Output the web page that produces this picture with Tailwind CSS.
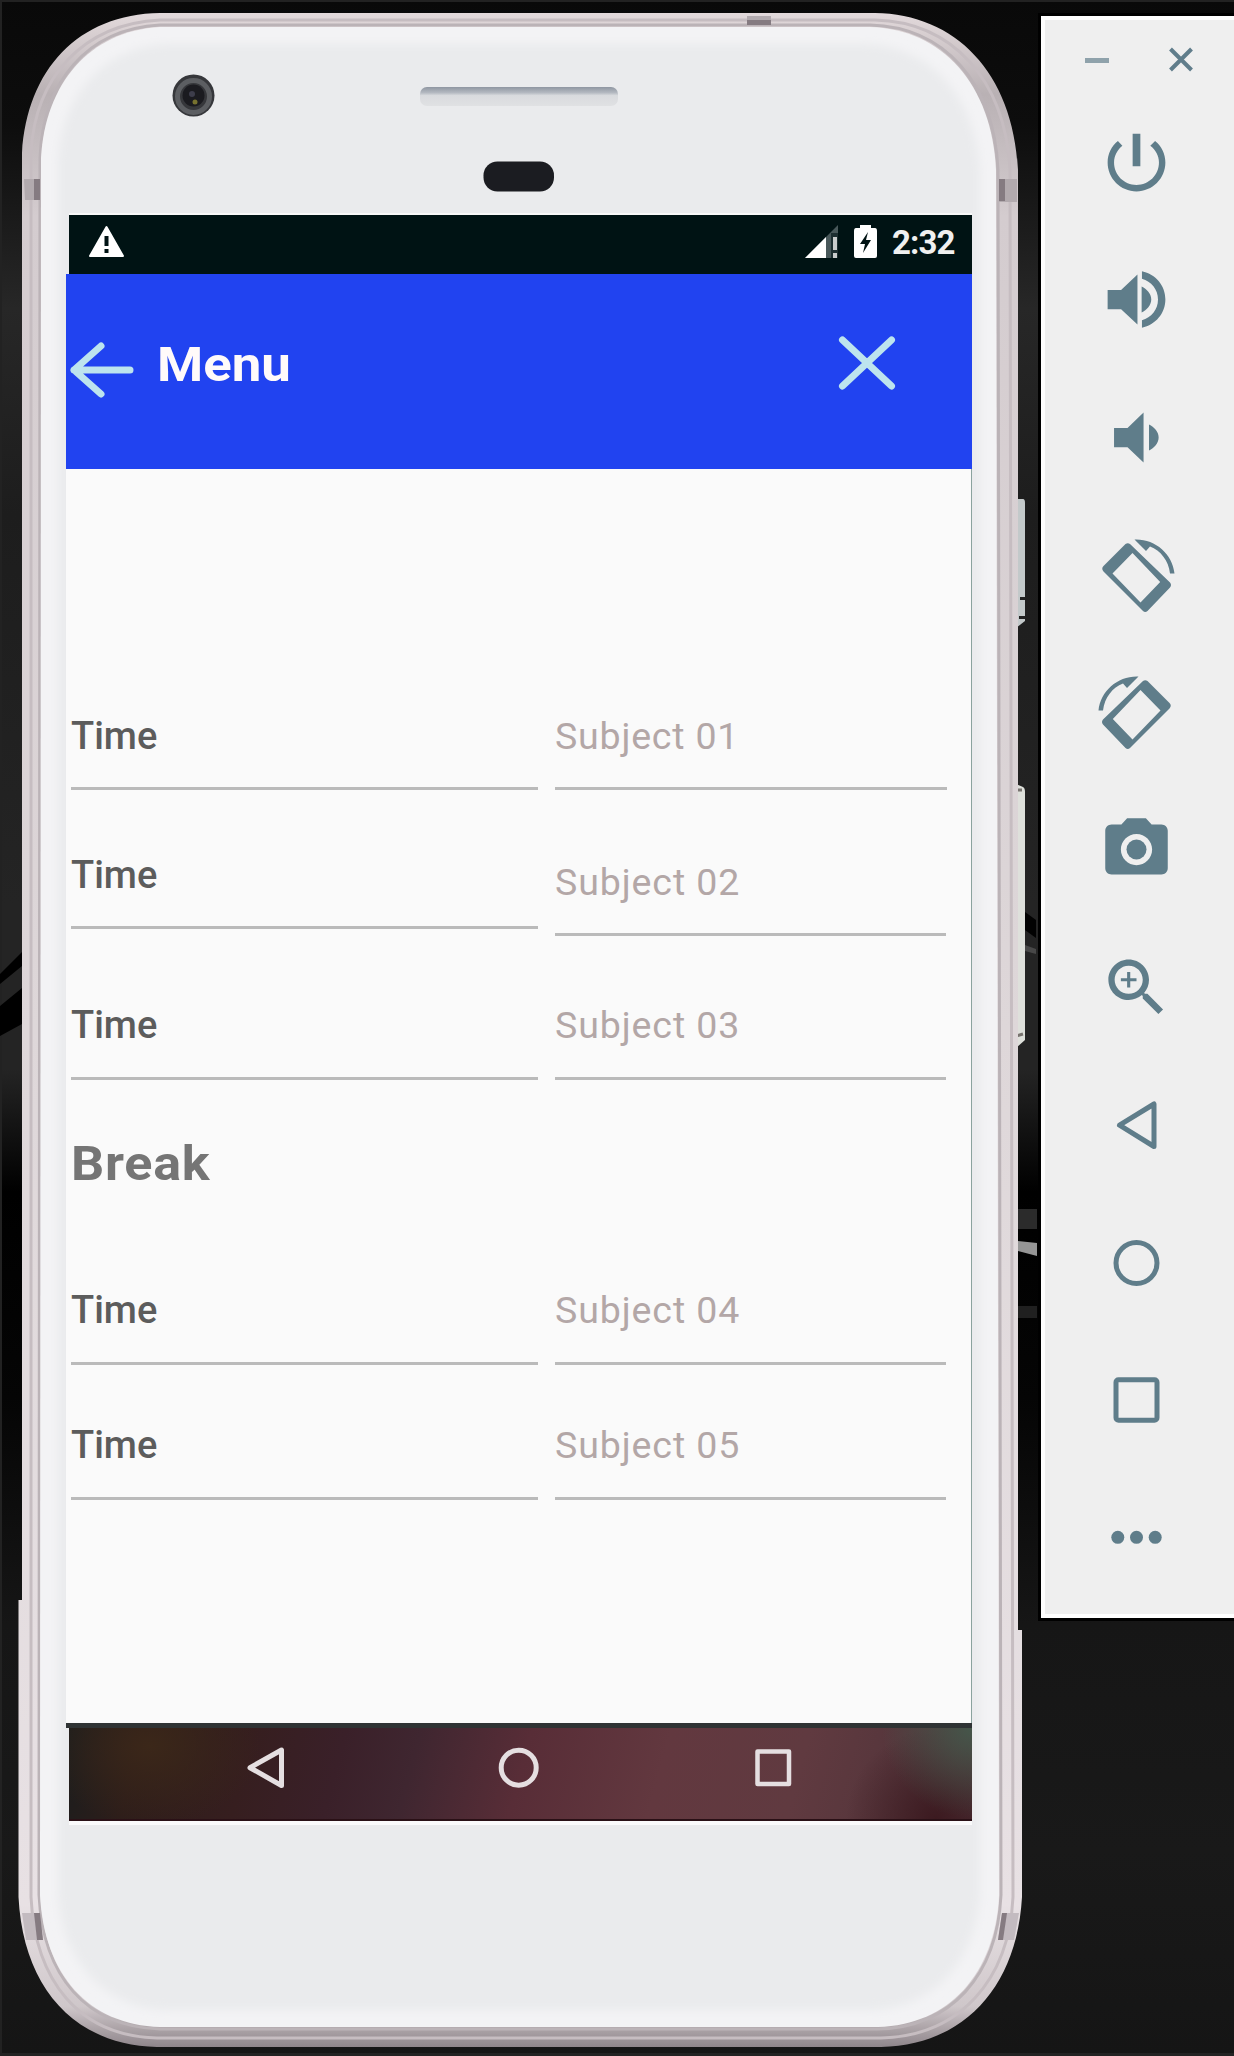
<!DOCTYPE html>
<html lang="en">
<head>
<meta charset="utf-8">
<title>Menu</title>
<script src="https://cdn.jsdelivr.net/npm/@tailwindcss/browser@4"></script>
</head>
<body class="bg-[#141414]">
<div class="relative flex h-[2056px] w-[1234px] items-start overflow-hidden font-[Roboto,sans-serif]">

  <!-- wallpaper and phone body -->
  <svg class="absolute inset-0" width="1234" height="2056" viewBox="0 0 1234 2056" fill="none">
    <defs>
      <linearGradient id="wall" x1="0" y1="0" x2="0" y2="1">
        <stop offset="0" stop-color="#090909"/><stop offset=".06" stop-color="#0d0d0d"/>
        <stop offset=".15" stop-color="#272727"/><stop offset=".25" stop-color="#1d1d1d"/>
        <stop offset=".44" stop-color="#242424"/><stop offset=".52" stop-color="#242424"/>
        <stop offset=".58" stop-color="#000"/><stop offset=".68" stop-color="#050505"/>
        <stop offset=".79" stop-color="#161616"/><stop offset=".9" stop-color="#191919"/>
        <stop offset="1" stop-color="#151515"/>
      </linearGradient>
      <linearGradient id="frame" x1="0" y1="0" x2="0" y2="1">
        <stop offset="0" stop-color="#e2d9db"/><stop offset=".04" stop-color="#b9b1b4"/>
        <stop offset=".1" stop-color="#d4cccf"/><stop offset=".5" stop-color="#ded7d9"/>
        <stop offset=".93" stop-color="#e8e1e4"/><stop offset=".98" stop-color="#cfc7ca"/>
        <stop offset="1" stop-color="#8f868b"/>
      </linearGradient>
      <linearGradient id="slot" x1="0" y1="0" x2="0" y2="1">
        <stop offset="0" stop-color="#8f96a1"/><stop offset=".3" stop-color="#b4b9c1"/>
        <stop offset=".45" stop-color="#d9dbde"/><stop offset="1" stop-color="#e0e1e3"/>
      </linearGradient>
      <filter id="soft" x="-10%" y="-10%" width="120%" height="120%"><feGaussianBlur stdDeviation="5"/></filter>
    </defs>
    <rect width="1234" height="2056" fill="url(#wall)"/>
    <path d="M0 0H1234V2H0ZM0 0H2V2056H0ZM0 2053H1234V2056H0Z" fill="#222"/>
    <path d="M0 974L22 952V966L0 984ZM0 1006L22 988V1024L0 1036Z" fill="#000"/>
    <path d="M1025 912L1036 920V938L1025 930Z" fill="#020202"/>
    <path d="M1025 945L1036 949V954L1025 951Z" fill="#484848"/>
    <path d="M1018 1209H1037V1229H1018Z" fill="#2b2b2b"/>
    <path d="M1018 1241L1037 1243V1256L1018 1251Z" fill="#969696"/>
    <path d="M1018 1306H1037V1318H1018Z" fill="#202020"/>

    <path d="M1016 499H1023Q1025 499 1025 503V621L1016 628Z" fill="#c3c9ca"/>
    <path d="M1020 597H1025V600H1020ZM1019 616H1025V619H1019Z" fill="#222"/>
    <path d="M1016 784L1023 787Q1025 788 1025 792V1040L1016 1048Z" fill="#dee0db"/>
    <path d="M1016 790H1022M1016 1036L1023 1034" stroke="#77736f" stroke-width="3"/>

    <path d="M160 13H875C955 14 1013 72 1018 170V1630H1022V1897C1017 1986 965 2045 881 2047H157C73 2045 23 1986 18.500 1897V1600H22V153C27 70 78 14 160 13Z" fill="url(#frame)"/>
    <path d="M160 20H875C951 22 1005 78 1010 170L1013 1897C1009 1981 959 2036 881 2038H157C79 2036 35 1981 31 1897V153C35 77 83 24 160 20Z" stroke="#c6bdc1" stroke-width="3"/>
    <path d="M160 25H870C944 27 994 82 998 170L1001 1895C997 1976 951 2027 878 2029H160C86 2027 43 1976 39 1895L40 158C43 82 87 29 160 25Z" stroke="#bbb3b7" stroke-width="3"/>
    <path d="M160 27H870C942 29 992 84 996 170L999 1895C995 1974 949 2025 878 2027H160C88 2025 44 1974 40 1895L41 158C45 84 89 31 160 27Z" fill="#f3f3f5"/>
    <path d="M165 44H865C930 46 975 96 980 170V1895C976 1960 934 2008 872 2010H165C104 2008 62 1960 58 1895V160C62 94 104 48 165 44Z" fill="#eaebed" filter="url(#soft)"/>

    <path d="M24 179H40V200H25Z" fill="#b2aaae"/><path d="M34 179H40V200H34Z" fill="#857b81"/>
    <path d="M999 179H1017V202H999Z" fill="#b2aaae"/><path d="M999 179H1005V201H999Z" fill="#857b81"/>
    <path d="M747 16H771V25H747Z" fill="#b2aaae"/><path d="M747 20H771V25H747Z" fill="#857b81"/>
    <path d="M22 1913H40L43 1940H26Z" fill="#c3bbc0"/><path d="M34 1913H40L43 1940H37Z" fill="#857b81"/>
    <path d="M1002 1913H1019L1014 1940H998Z" fill="#c3bbc0"/><path d="M1002 1913H1007L1003 1940H998Z" fill="#857b81"/>

    <circle cx="193.500" cy="95.500" r="21" fill="#36373b"/>
    <circle cx="193.500" cy="96.500" r="16" stroke="#5c5e62" stroke-width="5"/>
    <circle cx="193.500" cy="95.500" r="11" fill="#1b1b20"/>
    <circle cx="192" cy="94" r="3" fill="#3d3d4b"/><circle cx="195" cy="102" r="2.500" fill="#77722f"/>
    <rect x="420" y="87" width="198" height="19" rx="7" fill="url(#slot)"/>
    <rect x="483.500" y="161.500" width="70.500" height="30" rx="14" fill="#1b1c21"/>
  </svg>

  <!-- phone screen -->
  <main class="relative ml-[66px] mt-[215px] w-[906px]">
    <div class="ml-[3px] flex h-[59px] items-start bg-[#001314] pl-[19px] pr-[18px] pt-[9px] shadow-[0_-2px_0_#f8f8f8]">
      <svg class="mt-px" width="37" height="33" viewBox="0 0 37 33"><path d="M18.500 2L35 31H2Z" fill="#fff" stroke="#fff" stroke-width="2" stroke-linejoin="round"/><path d="M18.500 11V21M18.500 24V28" stroke="#001314" stroke-width="4"/></svg>
      <svg class="ml-auto" width="33" height="34" viewBox="0 0 33 34"><path d="M33 1V34H0Z" fill="#48585a"/><path d="M21 13V34H0Z" fill="#fff"/><path d="M26 9H33V34H26Z" fill="#001314" fill-opacity=".6"/><path d="M30 13V26M30 29V34" stroke="#c8cccc" stroke-width="4"/></svg>
      <svg class="ml-4" width="23" height="34" viewBox="0 0 23 34"><path d="M6 1H17V4H21Q23 4 23 7V32Q23 34 21 34H2Q0 34 0 32V7Q0 4 2 4H6Z" fill="#fff"/><path d="M14 8L6 20H11L9 29L17 16H12Z" fill="#001314"/></svg>
      <span class="-mt-px ml-[15px] w-[62px] whitespace-nowrap text-[33px] font-bold leading-[40px] tracking-[-0.9px] text-[#f0f0f0]">2:32</span>
    </div>
    <header class="flex h-[195px] items-start bg-[#2143f0] pl-[3px] pr-[75px]">
      <svg class="mt-[67px]" width="66" height="58" viewBox="0 0 66 58" fill="none" stroke="#bde4ee" stroke-width="7" stroke-linecap="round" stroke-linejoin="round"><path d="M32 5L5 29L32 53M5 29H61"/></svg>
      <h1 class="ml-[22px] mt-[63px] origin-left scale-x-[1.1] text-[48px] font-bold leading-[56px] text-[#fffafa]">Menu</h1>
      <svg class="ml-auto mt-[61px]" width="60" height="56" viewBox="0 0 60 56" stroke="#bde4ee" stroke-width="7" stroke-linecap="round"><path d="M5.500 5L54.500 51M54.500 5L5.500 51"/></svg>
    </header>

    <section class="h-[1254px] border-r border-[#8ba39f] bg-[#fafafa] pl-[5px] pt-[231px]">
      <div class="flex h-[139px] items-start gap-[17px]">
        <div class="h-[90px] w-[467px] border-b-[3px] border-[#bababa] pt-[14px] text-[38px] font-medium leading-[44px] text-[#5c5c5c]">Time</div>
        <div class="h-[90px] w-[392px] border-b-[3px] border-[#bababa] pt-[14px] text-[37.500px] leading-[44px] tracking-[0.8px] text-[#b3a7a7]">Subject 01</div>
      </div>
      <div class="flex h-[151px] items-start gap-[17px]">
        <div class="h-[90px] w-[467px] border-b-[3px] border-[#bababa] pt-[14px] text-[38px] font-medium leading-[44px] text-[#5c5c5c]">Time</div>
        <div class="mt-[7px] h-[90px] w-[391px] border-b-[3px] border-[#bababa] pt-[14px] text-[37.500px] leading-[44px] tracking-[0.9px] text-[#b3a7a7]">Subject 02</div>
      </div>
      <div class="flex h-[137px] items-start gap-[17px]">
        <div class="h-[90px] w-[467px] border-b-[3px] border-[#bababa] pt-[13px] text-[38px] font-medium leading-[44px] text-[#5c5c5c]">Time</div>
        <div class="h-[90px] w-[391px] border-b-[3px] border-[#bababa] pt-[13px] text-[37.500px] leading-[44px] tracking-[0.9px] text-[#b3a7a7]">Subject 03</div>
      </div>
      <h2 class="h-[148px] w-fit origin-left scale-x-[1.085] pt-[9px] text-[48px] font-bold leading-[56px] tracking-[0.7px] text-[#757575]">Break</h2>
      <div class="flex h-[135px] items-start gap-[17px]">
        <div class="h-[90px] w-[467px] border-b-[3px] border-[#bababa] pt-[13px] text-[38px] font-medium leading-[44px] text-[#5c5c5c]">Time</div>
        <div class="h-[90px] w-[391px] border-b-[3px] border-[#bababa] pt-[13px] text-[37.500px] leading-[44px] tracking-[0.9px] text-[#b3a7a7]">Subject 04</div>
      </div>
      <div class="flex items-start gap-[17px]">
        <div class="h-[90px] w-[467px] border-b-[3px] border-[#bababa] pt-[13px] text-[38px] font-medium leading-[44px] text-[#5c5c5c]">Time</div>
        <div class="h-[90px] w-[391px] border-b-[3px] border-[#bababa] pt-[13px] text-[37.500px] leading-[44px] tracking-[0.9px] text-[#b3a7a7]">Subject 05</div>
      </div>
    </section>

    <div class="h-[5px] bg-[#2f3334]"></div>
    <nav class="ml-[3px] flex h-[93px] items-start border-b-2 border-b-[#2a1016] bg-[radial-gradient(circle_at_100%_0%,#45564a_0,#45564a00_90px),radial-gradient(circle_at_96%_100%,#3c1a20_0,#3c1a2000_90px),radial-gradient(110px_80px_at_9%_20%,#3b2719_0,#3b271900_100%),linear-gradient(105deg,#1b1d1d_0%,#2d1d1a_8%,#361e1f_20%,#3a2029_30%,#3f2630_38%,#582d37_50%,#62383f_65%,#603a40_80%,#4d3238_100%)] pt-[18px] shadow-[0_4px_0_#fafafb]">
      <svg class="ml-[177px]" width="40" height="44" viewBox="0 0 40 44" fill="none" stroke="#e5dfe1" stroke-width="5" stroke-linejoin="round"><path d="M35.500 4V39.500L4 21.700Z"/></svg>
      <svg class="ml-[212px]" width="42" height="44" viewBox="0 0 42 44" fill="none" stroke="#e5dfe1" stroke-width="5"><circle cx="20.700" cy="21.700" r="17.500"/></svg>
      <svg class="ml-[213px]" width="40" height="44" viewBox="0 0 40 44" fill="none" stroke="#e5dfe1" stroke-width="4.500" stroke-linejoin="round"><path d="M4.500 5.500H36V38H4.500Z"/></svg>
    </nav>
  </main>

  <!-- emulator toolbar -->
  <aside class="relative ml-[69px] mt-[16px] h-[1602px] w-[193px] border-4 border-r-0 border-white bg-[#efefef] shadow-[0_0_0_3px_#000]">
    <div class="flex h-[73px] items-start pl-[40px] pt-[27px]">
      <svg class="mt-px" width="24" height="24" viewBox="0 0 24 24"><path d="M0 10H24V15H0Z" fill="#8fa2ab"/></svg>
      <svg class="ml-[59px]" width="26" height="26" viewBox="0 0 26 26" stroke="#607d8b" stroke-width="4"><path d="M2.500 2L23.500 23M23.500 2L2.500 23"/></svg>
    </div>
    <div class="grid auto-rows-[137.45px] justify-items-center pr-[6px] text-[#5f7d8a] [&>svg]:mt-[31px] [&>svg]:self-start [&>svg]:overflow-visible">
      <svg width="77" height="77" viewBox="0 0 24 24" fill="currentColor"><path d="M13.200 3h-2.400v10.200h2.400V3zm4.600 2.300l-1.500 1.500C17.900 8 19 9.900 19 12c0 3.870-3.130 7-7 7s-7-3.130-7-7c0-2.100 1.100-4 2.600-5.200L6.200 5.300C4.200 6.900 3 9.300 3 12c0 4.970 4.030 9 9 9s9-4.030 9-9c0-2.700-1.200-5.100-3.200-6.700z"/></svg>
      <svg width="77" height="77" viewBox="0 0 24 24" fill="currentColor"><path d="M3 9v6h4.200l5.100 4.800V4.200L7.200 9H3zm13.600 3c0-1.770-1.400-3.290-3-4.030v8.050c1.600-.73 3-2.250 3-4.020zM13.700 3.230v2.300c2.890.86 5 3.300 5 6.470s-2.110 5.610-5 6.470v2.300c4.310-.91 7.300-4.490 7.300-8.770s-2.990-7.860-7.300-8.770z"/></svg>
      <svg width="77" height="77" viewBox="0 0 24 24" fill="currentColor"><path d="M18.900 12c0-1.770-1.400-3.290-3-4.030v8.050c1.600-.73 3-2.250 3-4.020zM5 9v6h4.200l5 4.800V4.200L9.200 9H5z"/></svg>
      <svg width="77" height="77" viewBox="-38.500 -38.500 77 77" fill="currentColor"><path fill-rule="evenodd" d="M-11 -30.500Q-8.700 -32 -6.500 -30.500L33.500 8Q35.500 10.500 33.500 13L11 36.500Q8.700 38.500 6.500 36.500L-33 -3Q-35.500 -6 -33 -8.500ZM-4 -21.500L-24 -1L4 28L23.700 7.500Z"/><path d="M-2 -35C18 -36 36 -21 38 -1H33.500C32 -14 24 -24 13.500 -28L9.500 -23.500Z"/></svg>
      <svg width="77" height="77" viewBox="-38.500 -38.500 77 77" fill="currentColor"><g transform="translate(0 -1) scale(-1 1)"><path fill-rule="evenodd" d="M-11 -30.500Q-8.700 -32 -6.500 -30.500L33.500 8Q35.500 10.500 33.500 13L11 36.500Q8.700 38.500 6.500 36.500L-33 -3Q-35.500 -6 -33 -8.500ZM-4 -21.500L-24 -1L4 28L23.700 7.500Z"/><path d="M-2 -35C18 -36 36 -21 38 -1H33.500C32 -14 24 -24 13.500 -28L9.500 -23.500Z"/></g></svg>
      <svg width="75" height="77" viewBox="0 0 24 24" fill="currentColor"><circle cx="12" cy="12" r="3.200"/><path d="M9 2L7.170 4H4c-1.100 0-2 .9-2 2v12c0 1.100.9 2 2 2h16c1.100 0 2-.9 2-2V6c0-1.100-.9-2-2-2h-3.170L15 2H9zm3 15c-2.760 0-5-2.240-5-5s2.240-5 5-5 5 2.240 5 5-2.240 5-5 5z"/></svg>
      <svg width="75" height="77" viewBox="0 0 24 24" fill="currentColor"><path d="M15.500 14h-.79l-.28-.27C15.410 12.590 16 11.110 16 9.500 16 5.910 13.090 3 9.500 3S3 5.910 3 9.500 5.910 16 9.500 16c1.610 0 3.090-.59 4.230-1.570l.27.28v.79l5 4.990L20.490 19l-4.990-5zm-6 0C7.010 14 5 11.990 5 9.500S7.010 5 9.500 5 14 7.010 14 9.500 11.990 14 9.500 14zM12 10h-2v2H9v-2H7V9h2V7h1v2h2v1z"/></svg>
      <svg width="77" height="77" viewBox="-38.500 -38.500 77 77" fill="none" stroke="currentColor" stroke-width="5" stroke-linejoin="round"><path d="M17.500 -20.500V22L-17 .7Z"/></svg>
      <svg width="77" height="77" viewBox="-38.500 -38.500 77 77" fill="none" stroke="currentColor" stroke-width="5"><circle cy=".5" r="20.500"/></svg>
      <svg width="77" height="77" viewBox="-38.500 -38.500 77 77" fill="none" stroke="currentColor" stroke-width="5"><rect x="-20.500" y="-19.700" width="41" height="40.500" rx="2.500"/></svg>
      <svg width="77" height="77" viewBox="-38.500 -38.500 77 77" fill="currentColor"><circle cx="-18.700" cy=".8" r="6.500"/><circle cy=".8" r="6.500"/><circle cx="18.700" cy=".8" r="6.500"/></svg>
    </div>
  </aside>
</div>
</body>
</html>
